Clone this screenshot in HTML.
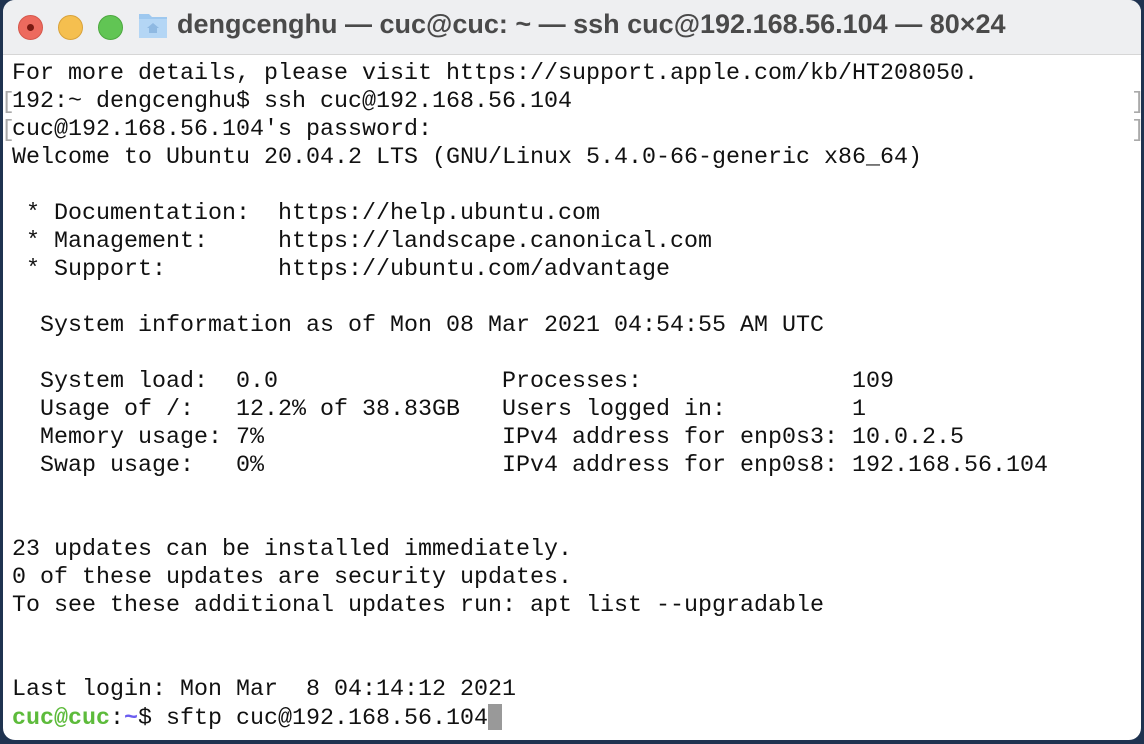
<!DOCTYPE html>
<html><head><meta charset="utf-8"><style>
html,body{margin:0;padding:0;width:1144px;height:744px;overflow:hidden;background:#1f3350;}
.win{position:absolute;left:3px;top:0;width:1138px;height:740px;background:#fff;border-radius:12px;overflow:hidden;}
.title{position:absolute;left:0;top:0;width:100%;height:54px;background:#eeeff1;border-bottom:1px solid #d6d6d6;}
.dot{position:absolute;top:15px;width:24px;height:24px;border-radius:50%;}
.tt{position:absolute;left:174px;top:9px;font:bold 27px "Liberation Sans",sans-serif;color:#4a4a4a;white-space:nowrap;}
pre{position:absolute;left:9px;top:60px;margin:0;font:23.33px/28px "Liberation Mono",monospace;color:#111;}
.g{color:#5dbb3b;font-weight:bold}.b{color:#6b5df0;font-weight:bold}
.cur{display:inline-block;width:14px;height:26px;background:#999;vertical-align:-6px}
.br{position:absolute;color:#aaa;font:23px/28px "Liberation Mono",monospace}
</style></head><body>
<div class="win">
<div class="title">
<div class="dot" style="left:15px;background:#ed6a5e;border:1px solid #d5574c;width:23px;height:23px"><div style="position:absolute;left:8px;top:8px;width:7px;height:7px;border-radius:50%;background:#7a1a12"></div></div>
<div class="dot" style="left:55px;background:#f5bf4f;border:1px solid #d9a23a;width:23px;height:23px"></div>
<div class="dot" style="left:95px;background:#61c554;border:1px solid #4ca83f;width:23px;height:23px"></div>
<svg style="position:absolute;left:135px;top:11px" width="30" height="28"><path d="M1 3h10l3 3h15v21H1z" fill="#9ec8ef"/><rect x="1" y="8" width="28" height="19" fill="#b4d6f5"/><path d="M15 12l-6 5h2v5h8v-5h2z" fill="#8fb9e2"/></svg>
<div class="tt">dengcenghu — cuc@cuc: ~ — ssh cuc@192.168.56.104 — 80×24</div>
</div>
<div class="br" style="left:-2px;top:88px">[</div>
<div class="br" style="left:-2px;top:116px">[</div>
<div class="br" style="left:1128px;top:88px">]</div>
<div class="br" style="left:1128px;top:116px">]</div>
<pre>For more details, please visit https://support.apple.com/kb/HT208050.
192:~ dengcenghu$ ssh cuc@192.168.56.104
cuc@192.168.56.104's password:
Welcome to Ubuntu 20.04.2 LTS (GNU/Linux 5.4.0-66-generic x86_64)

 * Documentation:  https://help.ubuntu.com
 * Management:     https://landscape.canonical.com
 * Support:        https://ubuntu.com/advantage

  System information as of Mon 08 Mar 2021 04:54:55 AM UTC

  System load:  0.0                Processes:               109
  Usage of /:   12.2% of 38.83GB   Users logged in:         1
  Memory usage: 7%                 IPv4 address for enp0s3: 10.0.2.5
  Swap usage:   0%                 IPv4 address for enp0s8: 192.168.56.104


23 updates can be installed immediately.
0 of these updates are security updates.
To see these additional updates run: apt list --upgradable


Last login: Mon Mar  8 04:14:12 2021
<span class="g">cuc@cuc</span>:<span class="b">~</span>$ sftp cuc@192.168.56.104<span class="cur"></span></pre>
</div>
</body></html>
